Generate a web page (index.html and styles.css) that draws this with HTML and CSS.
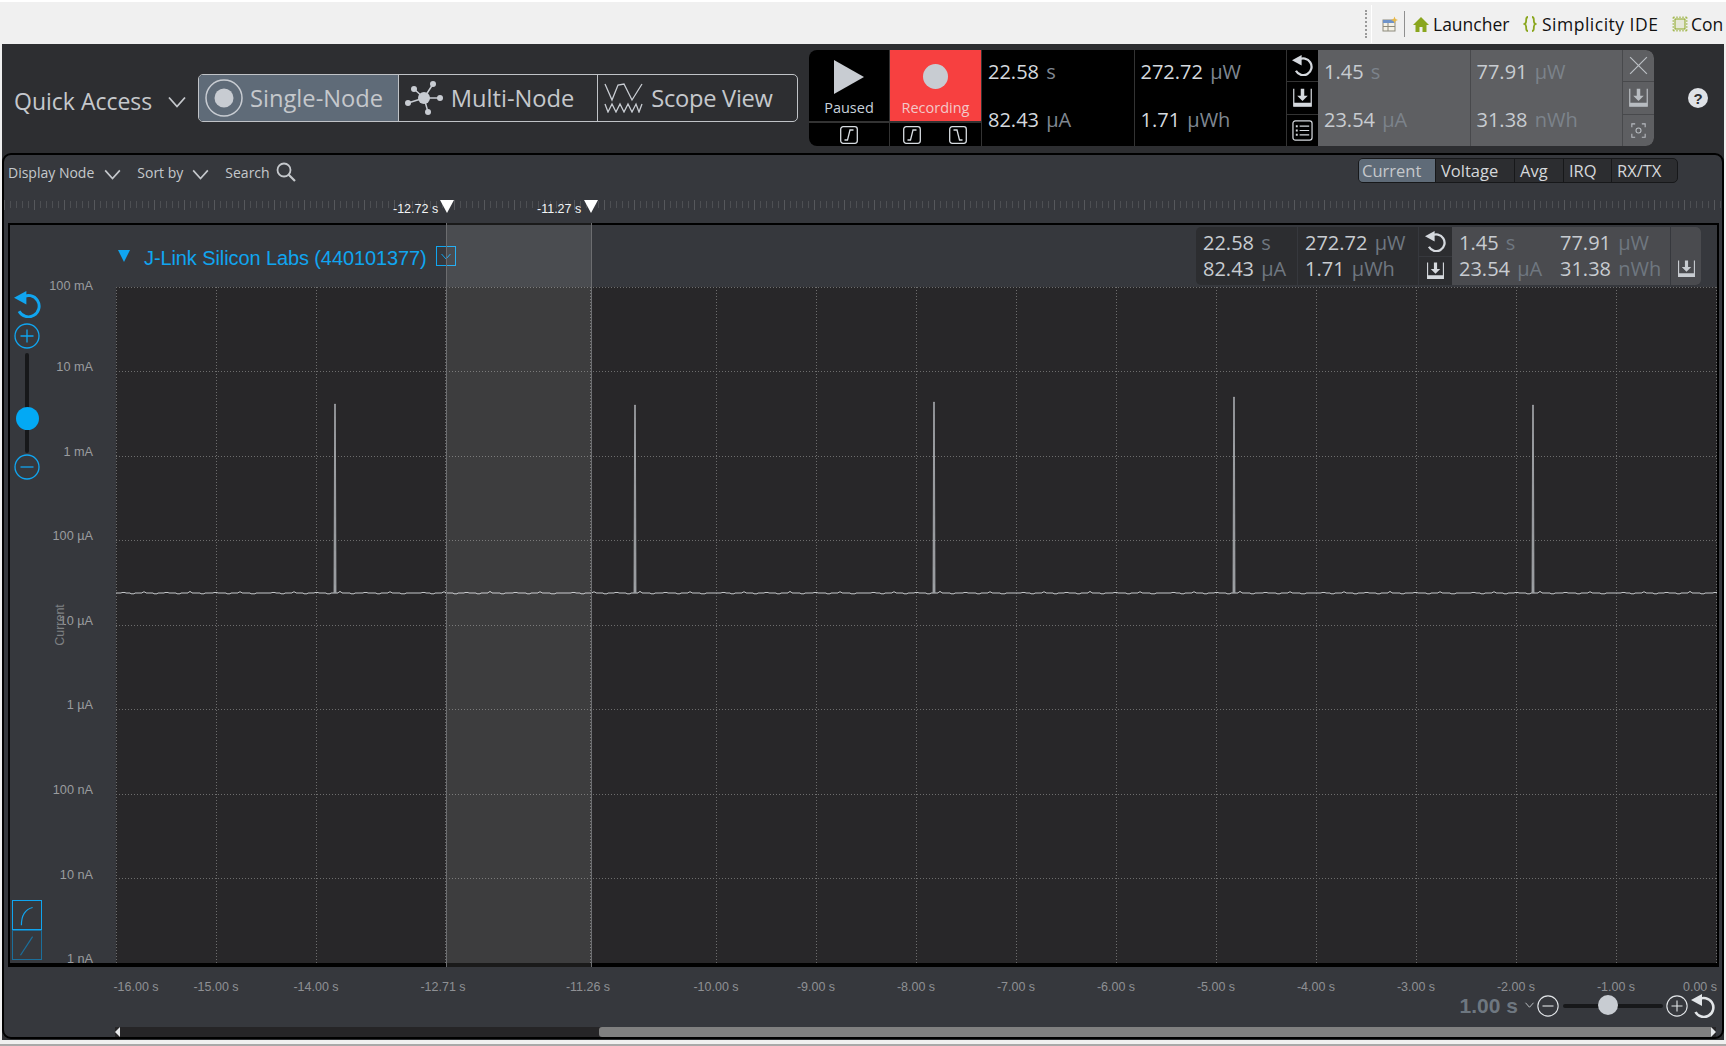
FILE: index.html
```html
<!DOCTYPE html>
<html lang="en">
<head>
<meta charset="utf-8">
<title>Energy Profiler</title>
<link rel="stylesheet" href="styles.css">
</head>
<body>
<svg class="defs" width="0" height="0" aria-hidden="true">
  <symbol id="i-reset" viewBox="0 0 24 24">
    <path d="M7.500 5.600A9.500 9.500 0 1 1 4.500 18" fill="none" stroke="currentColor" stroke-width="2.600"/>
    <path d="M0 6 11 0V12Z" fill="currentColor"/>
  </symbol>
  <symbol id="i-save" viewBox="0 0 24 24">
    <path d="M2 2V22H22V2" fill="none" stroke="currentColor" stroke-width="1.400"/>
    <path d="M2 18H22V22H2ZM10 2H14V10H18L12 16 6 10H10Z" fill="currentColor"/>
  </symbol>
  <symbol id="i-list" viewBox="0 0 22 22">
    <rect x="1" y="1" width="20" height="20" rx="2.500" fill="none" stroke="currentColor" stroke-width="1.300"/>
    <path d="M8 6.500H18M8 11H18M8 15.500H18" stroke="currentColor" stroke-width="1.300"/>
    <path d="M4 5.500h2v2H4ZM4 10h2v2H4ZM4 14.500h2v2H4Z" fill="currentColor"/>
  </symbol>
  <symbol id="i-rise" viewBox="0 0 18 18">
    <rect x="0.700" y="0.700" width="16.600" height="16.600" rx="2.500" fill="none" stroke="currentColor" stroke-width="1.300"/>
    <path d="M4.500 14H7.500L10 4H13.500" fill="none" stroke="currentColor" stroke-width="1.300"/>
  </symbol>
  <symbol id="i-fall" viewBox="0 0 18 18">
    <rect x="0.700" y="0.700" width="16.600" height="16.600" rx="2.500" fill="none" stroke="currentColor" stroke-width="1.300"/>
    <path d="M4.500 4H8L10.500 14H13.500" fill="none" stroke="currentColor" stroke-width="1.300"/>
  </symbol>
  <symbol id="i-chev" viewBox="0 0 18 12">
    <path d="M1 1.500 9 10.500 17 1.500" fill="none" stroke="currentColor" stroke-width="1.800"/>
  </symbol>
  <symbol id="i-plus" viewBox="0 0 26 26">
    <circle cx="13" cy="13" r="12" fill="none" stroke="currentColor" stroke-width="1.300"/>
    <path d="M6.500 13H19.500M13 6.500V19.500" stroke="currentColor" stroke-width="1.300"/>
  </symbol>
  <symbol id="i-minus" viewBox="0 0 26 26">
    <circle cx="13" cy="13" r="12" fill="none" stroke="currentColor" stroke-width="1.300"/>
    <path d="M6.500 13H19.500" stroke="currentColor" stroke-width="1.300"/>
  </symbol>
</svg>

<header class="topbar">
  <span class="grip"></span>
  <span class="edge"></span>
  <svg class="perspective" viewBox="0 0 16 16"><rect x="1" y="4" width="12" height="11" fill="#f4f1e6" stroke="#8d8a7c"/><rect x="1" y="4" width="12" height="3" fill="#6f93c9"/><path d="M1 10.500H13M6 7V15" stroke="#8d8a7c"/><path d="M12.500 0.500 13.500 3 16 4 13.500 5 12.500 7.500 11.500 5 9 4 11.500 3Z" fill="#e9b949"/></svg>
  <span class="sep"></span>
  <svg class="homeicon" viewBox="0 0 16 15"><path d="M8 0 16 8H13.500V15H9.500V10H6.500V15H2.500V8H0Z" fill="#8aa61e"/></svg>
  <span class="persp persp-launcher">Launcher</span>
  <svg class="bracesicon" viewBox="0 0 14 16"><path d="M5 1C2.500 1 3.500 3.500 3 6 2.800 7.300 1.500 8 1.500 8S2.800 8.700 3 10C3.500 12.500 2.500 15 5 15M9 1C11.500 1 10.500 3.500 11 6 11.200 7.300 12.500 8 12.500 8S11.200 8.700 11 10C10.500 12.500 11.500 15 9 15" fill="none" stroke="#8aa61e" stroke-width="1.800"/></svg>
  <span class="persp persp-ide">Simplicity IDE</span>
  <svg class="chipicon" viewBox="0 0 16 16"><rect x="3" y="3" width="10" height="10" fill="#e6e8d8" stroke="#8aa61e"/><path d="M2 0.500V2M5 0.500V2M8 0.500V2M11 0.500V2M14 0.500V2M2 14V15.500M5 14V15.500M8 14V15.500M11 14V15.500M14 14V15.500M0.500 2H2M0.500 5H2M0.500 8H2M0.500 11H2M0.500 14H2M14 2H15.500M14 5H15.500M14 8H15.500M14 11H15.500M14 14H15.500" stroke="#8aa61e"/></svg>
  <span class="persp persp-con">Con</span>
</header>

<div class="app">
  <section class="head">
    <div class="qa">
      <span class="qa-text">Quick Access</span>
      <svg class="qa-chev"><use href="#i-chev"/></svg>
    </div>
    <div class="seg">
      <div class="seg-item seg-active">
        <svg class="seg-ic-single" viewBox="0 0 38 38"><circle cx="19" cy="19" r="18" fill="none" stroke="#c8ccd2" stroke-width="1.500"/><circle cx="19" cy="19" r="9.500" fill="#c8ccd2"/></svg>
        <span>Single-Node</span>
      </div>
      <div class="seg-item">
        <svg class="seg-ic-multi" viewBox="0 0 38 34"><path d="M19 17 9 8M19 17 28 3M19 17H35M19 17 23 31M19 17 3 22" stroke="#c8ccd2" stroke-width="1.500"/><circle cx="19" cy="17" r="6" fill="#c8ccd2"/><circle cx="9" cy="8" r="3" fill="#c8ccd2"/><circle cx="28" cy="3" r="3" fill="#c8ccd2"/><circle cx="35" cy="17" r="3" fill="#c8ccd2"/><circle cx="23" cy="31" r="3" fill="#c8ccd2"/><circle cx="3" cy="22" r="3" fill="#c8ccd2"/></svg>
        <span>Multi-Node</span>
      </div>
      <div class="seg-item seg-scope">
        <svg class="seg-ic-scope" viewBox="0 0 39 30"><path d="M1 1 8 17 14 2 20 1 28 17 38 1" fill="none" stroke="#c8ccd2" stroke-width="1.300"/><path d="M1 21 4 29 8 21 12 29 16 21 20 29 24 21 28 29 32 21 35 29 38 21" fill="none" stroke="#c8ccd2" stroke-width="1.300"/></svg>
        <span>Scope View</span>
      </div>
    </div>
    <div class="readout">
      <div class="mode mode-paused">
        <div class="mode-top">
          <svg class="play" viewBox="0 0 30 34"><path d="M0 0 30 17 0 34Z" fill="#c8ccd2"/></svg>
          <span class="mode-label">Paused</span>
        </div>
        <div class="mode-bottom"><svg class="trig"><use href="#i-rise"/></svg></div>
      </div>
      <div class="mode mode-rec">
        <div class="mode-top rec-top">
          <span class="rec-dot"></span>
          <span class="mode-label rec-label">Recording</span>
        </div>
        <div class="mode-bottom mode-bottom-two"><svg class="trig"><use href="#i-rise"/></svg><svg class="trig"><use href="#i-fall"/></svg></div>
      </div>
      <div class="stat"><span>22.58 <i>s</i></span><span>82.43 <i>µA</i></span></div>
      <div class="stat"><span>272.72 <i>µW</i></span><span>1.71 <i>µWh</i></span></div>
      <div class="tools">
        <div class="tool"><svg class="tool-ic"><use href="#i-reset"/></svg></div>
        <div class="tool"><svg class="tool-ic"><use href="#i-save"/></svg></div>
        <div class="tool"><svg class="tool-ic"><use href="#i-list"/></svg></div>
      </div>
      <div class="stat stat-grey"><span>1.45 <i>s</i></span><span>23.54 <i>µA</i></span></div>
      <div class="stat stat-grey"><span>77.91 <i>µW</i></span><span>31.38 <i>nWh</i></span></div>
      <div class="tools tools-grey">
        <div class="tool"><svg class="tool-ic" viewBox="0 0 20 20"><path d="M2 2 18 18M18 2 2 18" stroke="currentColor" stroke-width="1.200"/></svg></div>
        <div class="tool"><svg class="tool-ic"><use href="#i-save"/></svg></div>
        <div class="tool"><svg class="tool-ic-sm" viewBox="0 0 18 18"><path d="M1 5V1H5M13 1H17V5M17 13V17H13M5 17H1V13" fill="none" stroke="currentColor" stroke-width="1.300"/><circle cx="9" cy="9" r="3" fill="none" stroke="currentColor" stroke-width="1.300"/></svg></div>
      </div>
    </div>
    <svg class="help" viewBox="0 0 20 20"><circle cx="10" cy="10" r="10" fill="#dfe2e6"/><text x="10" y="15.500" text-anchor="middle" class="help-mark">?</text></svg>
  </section>

  <section class="panel">
    <div class="toolbar">
      <div class="tb-left">
        <span class="tb-item">Display Node</span><svg class="tb-chev"><use href="#i-chev"/></svg>
        <span class="tb-item tb-sort">Sort by</span><svg class="tb-chev tb-chev2"><use href="#i-chev"/></svg>
        <span class="tb-item tb-search">Search</span>
        <svg class="tb-mag" viewBox="0 0 20 20"><circle cx="8" cy="8" r="6.500" fill="none" stroke="#c5c8cc" stroke-width="1.800"/><path d="M12.500 12.500 19 19" stroke="#c5c8cc" stroke-width="2.200"/></svg>
      </div>
      <div class="tabs">
        <span class="tab tab-active tab-current">Current</span>
        <span class="tab tab-voltage">Voltage</span>
        <span class="tab tab-avg">Avg</span>
        <span class="tab tab-irq">IRQ</span>
        <span class="tab tab-rx">RX/TX</span>
      </div>
    </div>

    <div class="ruler">
      <div class="marker marker-a"><span>-12.72 s</span><b></b></div>
      <div class="marker marker-b"><span>-11.27 s</span><b></b></div>
    </div>

    <div class="frame">
      <div class="frame-head">
        <span class="node-tri"></span>
        <span class="node-title">J-Link Silicon Labs (440101377)</span>
        <span class="node-box"><svg class="node-box-chev"><use href="#i-chev"/></svg></span>
        <div class="mini">
          <div class="mini-stat"><span>22.58 <i>s</i></span><span>82.43 <i>µA</i></span></div>
          <div class="mini-stat mini-wide"><span>272.72 <i>µW</i></span><span>1.71 <i>µWh</i></span></div>
          <div class="mini-tools">
            <div class="mini-tool"><svg class="mini-ic mini-ic-reset"><use href="#i-reset"/></svg></div>
            <div class="mini-tool"><svg class="mini-ic"><use href="#i-save"/></svg></div>
          </div>
          <div class="mini-grey">
            <div class="mini-stat mini-g1"><span>1.45 <i>s</i></span><span>23.54 <i>µA</i></span></div>
            <div class="mini-stat mini-g2"><span>77.91 <i>µW</i></span><span>31.38 <i>nWh</i></span></div>
            <div class="mini-save"><svg class="mini-ic"><use href="#i-save"/></svg></div>
          </div>
        </div>
      </div>
      <div class="frame-body">
        <div class="side">
          <div class="controls">
            <svg class="ctl-reset"><use href="#i-reset"/></svg>
            <svg class="ctl-circle"><use href="#i-plus"/></svg>
            <div class="vslider"><span class="vthumb"></span></div>
            <svg class="ctl-circle"><use href="#i-minus"/></svg>
            <div class="scale-btns">
              <span class="scale-btn scale-on"><svg viewBox="0 0 30 30"><path d="M9 26C9 16 13 9 21 7" fill="none" stroke="#10a5f0" stroke-width="1.300"/></svg></span>
              <span class="scale-btn"><svg viewBox="0 0 30 30"><path d="M8 26 21 6" fill="none" stroke="#1b6f9c" stroke-width="1.300"/></svg></span>
            </div>
          </div>
          <div class="yaxis">
            <span>100 mA</span><span>10 mA</span><span>1 mA</span><span>100 µA</span><span>10 µA</span><span>1 µA</span><span>100 nA</span><span>10 nA</span><span>1 nA</span>
          </div>
          <span class="yname">Current</span>
        </div>
        <div class="plot">
          <svg class="plot-svg" viewBox="0 0 1601 676" preserveAspectRatio="none">
            <defs>
              <pattern id="noise" x="0" y="300" width="150" height="12" patternUnits="userSpaceOnUse">
                <polyline fill="none" stroke="#c4c7ca" points="0,6 5,6 6,5.500 9,5.500 10,6 14,6 15,6.800 18,6.800 19,6 26,6 27,5 29,5 30,6 37,6 38,6.800 41,6.800 42,6 48,6 49,5.500 52,5.500 53,6 60,6 61,6.800 64,6.800 65,6 72,6 73,4.800 75,4.800 76,6 84,6 85,6.800 88,6.800 89,6 97,6 98,5.500 101,5.500 102,6 110,6 111,6.800 114,6.800 115,6 122,6 123,5 125,5 126,6 134,6 135,6.800 139,6.800 140,6 150,6"/>
              </pattern>
            </defs>
            <g class="grid">
              <path d="M0.500 0V676M100.500 0V676M200.500 0V676M329.500 0V676M474.500 0V676M600.500 0V676M700.500 0V676M800.500 0V676M900.500 0V676M1000.500 0V676M1100.500 0V676M1200.500 0V676M1300.500 0V676M1400.500 0V676M1500.500 0V676M1600.500 0V676"/>
              <path d="M0 0.500H1601M0 84.500H1601M0 169.500H1601M0 253.500H1601M0 338.500H1601M0 422.500H1601M0 507.500H1601M0 591.500H1601"/>
            </g>
            <rect x="0" y="300" width="1601" height="12" fill="url(#noise)"/>
            <g class="spikes">
              <path d="M218 306 218.700 117H219.300L220 306"/>
              <path d="M518 306 518.700 118H519.300L520 306"/>
              <path d="M817 306 817.700 115H818.300L819 306"/>
              <path d="M1117 306 1117.700 110H1118.300L1119 306"/>
              <path d="M1416 306 1416.700 118H1417.300L1418 306"/>
            </g>
          </svg>
        </div>
      </div>
      <div class="selection"></div>
    </div>

    <div class="xaxis">
      <span class="xl" style="left:132px">-16.00 s</span>
      <span class="xl" style="left:212px">-15.00 s</span>
      <span class="xl" style="left:312px">-14.00 s</span>
      <span class="xl" style="left:439px">-12.71 s</span>
      <span class="xl" style="left:584px">-11.26 s</span>
      <span class="xl" style="left:712px">-10.00 s</span>
      <span class="xl" style="left:812px">-9.00 s</span>
      <span class="xl" style="left:912px">-8.00 s</span>
      <span class="xl" style="left:1012px">-7.00 s</span>
      <span class="xl" style="left:1112px">-6.00 s</span>
      <span class="xl" style="left:1212px">-5.00 s</span>
      <span class="xl" style="left:1312px">-4.00 s</span>
      <span class="xl" style="left:1412px">-3.00 s</span>
      <span class="xl" style="left:1512px">-2.00 s</span>
      <span class="xl" style="left:1612px">-1.00 s</span>
      <span class="xl" style="left:1696px">0.00 s</span>
    </div>

    <div class="zoomrow">
      <span class="zoom-val">1.00 s</span>
      <svg class="zoom-chev"><use href="#i-chev"/></svg>
      <svg class="zoom-circle"><use href="#i-minus"/></svg>
      <div class="hslider"><span class="hthumb"></span></div>
      <svg class="zoom-circle zoom-plus"><use href="#i-plus"/></svg>
      <svg class="zoom-reset"><use href="#i-reset"/></svg>
    </div>

    <div class="scroll">
      <span class="scroll-left"></span>
      <span class="scroll-thumb"></span>
      <span class="scroll-right"></span>
    </div>
  </section>
</div>
</body>
</html>
```

FILE: styles.css
```css
* { box-sizing: border-box; }
html, body { margin: 0; height: 100%; }
body {
  width: 1726px;
  height: 1046px;
  overflow: hidden;
  background: #f0f0f0;
  font-family: "Open Sans", "Noto Sans", sans-serif;
  display: flex;
  flex-direction: column;
  border-bottom: 2px solid #a9a9a9;
}
i { font-style: normal; }
.defs { position: absolute; }

/* top bar */
.topbar {
  height: 44px;
  flex: none;
  border-top: 2px solid #fff;
  padding: 2px 0 0 1365px;
  display: flex;
  align-items: center;
  white-space: nowrap;
  overflow: hidden;
}
.grip { width: 2px; height: 28px; border-left: 2px dotted #9a9a9a; }
.edge { width: 1px; height: 38px; background: #fff; margin: 0 0 0 4px; }
.perspective { width: 16px; height: 16px; margin-left: 10px; }
.sep { width: 1px; height: 26px; background: #8f8f8f; margin-left: 6px; }
.homeicon { width: 16px; height: 15px; margin-left: 8px; }
.persp { font-size: 17.500px; color: #111; margin-left: 4px; }
.persp-launcher { width: 90px; }
.bracesicon { width: 14px; height: 16px; }
.persp-ide { width: 130px; margin-left: 5px; letter-spacing: 0.500px; }
.persp-con { margin-left: 3px; }
.chipicon { width: 16px; height: 16px; }

.app {
  width: 1722px;
  margin-left: 2px;
  height: 996px;
  flex: none;
  background: #2d2e31;
  display: flex;
  flex-direction: column;
}

/* header */
.head {
  height: 109px;
  flex: none;
  display: flex;
  align-items: center;
  padding: 0 0 1px 12px;
}
.qa { width: 184px; flex: none; display: flex; align-items: center; padding-top: 6px; color: #c5c8cc; }
.qa-text { font-size: 23px; width: 153px; white-space: nowrap; }
.qa-chev { width: 18px; height: 12px; margin-top: 2px; margin-left: 1px; }

.seg {
  width: 600px;
  height: 48px;
  flex: none;
  display: flex;
  border: 1px solid #c0c3c7;
  border-radius: 5px;
  overflow: hidden;
  color: #c5c8cc;
  font-size: 23.700px;
}
.seg-item {
  flex: 1;
  display: flex;
  align-items: center;
  border-right: 1px solid #c0c3c7;
  white-space: nowrap;
}
.seg-item:last-child { border-right: 0; }
.seg-active { background: #5f6b78; }
.seg-scope { letter-spacing: -0.300px; }
.seg-ic-single { width: 38px; height: 38px; margin: 0 7px 0 6px; }
.seg-ic-multi { width: 38px; height: 34px; margin: 0 8px 0 6px; }
.seg-ic-scope { width: 39px; height: 30px; margin: 0 8px 0 6px; }

.readout {
  width: 845px;
  height: 96px;
  flex: none;
  margin-left: 11px;
  background: #000;
  border-radius: 8px;
  overflow: hidden;
  display: flex;
  color: #d5d9de;
}
.mode { flex: none; display: flex; flex-direction: column; border-right: 1px solid #333; }
.mode-paused { width: 81px; }
.mode-rec { width: 92px; }
.mode-top { height: 71px; display: flex; flex-direction: column; align-items: center; padding-top: 10px; }
.rec-top { background: #f74040; padding-top: 14px; }
.play { width: 30px; height: 34px; }
.rec-dot { width: 25px; height: 25px; border-radius: 50%; background: #c8ccd2; }
.mode-label { font-size: 14.500px; line-height: 20px; margin-top: 4px; color: #c9d2dc; }
.rec-label { color: #f3c8c8; margin-top: 9px; }
.mode-bottom {
  flex: 1;
  border-top: 2px solid #333;
  display: flex;
  align-items: center;
  justify-content: center;
  padding-top: 1px;
  color: #d8dde2;
}
.mode-bottom-two { justify-content: space-between; padding: 1px 14px 0 13px; }
.trig { width: 18px; height: 18px; }

.stat {
  width: 152.500px;
  flex: none;
  border-right: 1px solid #333;
  display: flex;
  flex-direction: column;
  justify-content: center;
  padding: 0 0 4px 6px;
  font-size: 20px;
  word-spacing: 2px;
  white-space: nowrap;
}
.stat span { line-height: 48px; flex: none; }
.stat i { color: #7f8791; }
.stat-grey { background: #5e5f62; border-right-color: #48494c; color: #c8ccd1; }
.stat-grey i { color: #7c838b; }
.tools { width: 31px; flex: none; display: flex; flex-direction: column; color: #d5d9de; }
.tools-grey { background: #5e5f62; color: #b8bcc1; }
.tool {
  flex: 1;
  display: flex;
  align-items: center;
  justify-content: center;
  border-bottom: 1px solid #333;
}
.tools-grey .tool { border-bottom-color: #48494c; }
.tool:last-child { border-bottom: 0; }
.tool-ic { width: 21px; height: 21px; }
.tool-ic-sm { width: 15px; height: 15px; }
.help { width: 20px; height: 20px; margin-left: 34px; }
.help-mark { font: bold 15px "Liberation Sans", sans-serif; fill: #2d2e31; }

/* panel */
.panel {
  flex: 1;
  background: #36383d;
  border: 2px solid #000;
  border-radius: 9px;
  display: flex;
  flex-direction: column;
  position: relative;
  margin-bottom: 4px;
}
.toolbar { height: 38px; flex: none; position: relative; display: flex; align-items: center; justify-content: space-between; padding: 0 44px 3px 4px; }
.tb-left { display: flex; align-items: center; color: #c5c8cc; font-size: 14px; }
.tb-item { white-space: nowrap; }
.tb-chev { width: 17px; height: 11px; margin-left: 10px; margin-top: 3px; color: #c5c8cc; }
.tb-chev2 { margin-left: 9px; }
.tb-sort { margin-left: 16px; }
.tb-search { margin-left: 16px; }
.tb-mag { width: 20px; height: 20px; margin-left: 6px; margin-top: -2px; }

.tabs { width: 320px; height: 25px; display: flex; border: 1px solid #17181a; border-radius: 5px; background: #2c2d30; overflow: hidden; margin-top: -4px; font-size: 16.500px; color: #d5d8db; }
.tab { display: flex; align-items: center; padding-left: 5px; border-right: 1px solid #17181a; white-space: nowrap; }
.tab:last-child { border-right: 0; }
.tab-active { background: #5f6b78; color: #c5c8cc; padding-left: 3px; }
.tab-current { width: 77px; }
.tab-voltage { width: 79px; }
.tab-avg { width: 49px; }
.tab-irq { width: 48px; }
.tab-rx { flex: 1; }

.ruler {
  height: 30px;
  flex: none;
  position: relative;
  background-image:
    repeating-linear-gradient(90deg, #56585c 0 1px, transparent 1px 30px),
    repeating-linear-gradient(90deg, #4d4f53 0 1px, transparent 1px 6px);
  background-size: 100% 10px, 100% 7px;
  background-position: 0 7px, 0 8px;
  background-repeat: no-repeat;
}
.marker { position: absolute; top: 7px; display: flex; align-items: flex-start; }
.marker-a { left: 389px; }
.marker-b { left: 533px; }
.marker span { font: 12.500px/14px "Liberation Sans", sans-serif; color: #f2f4f6; margin-top: 2px; width: 47px; white-space: nowrap; }
.marker b { width: 0; height: 0; border-left: 7.500px solid transparent; border-right: 7.500px solid transparent; border-top: 13px solid #fff; }

/* frame */
.frame {
  width: 1711px;
  height: 744px;
  flex: none;
  margin-left: 4px;
  border: solid #000;
  border-width: 2px 2px 4px;
  position: relative;
  display: flex;
  flex-direction: column;
}
.frame-head { height: 62px; flex: none; display: flex; align-items: flex-start; position: relative; padding-top: 2px; }
.node-tri { width: 0; height: 0; border-left: 6.500px solid transparent; border-right: 6.500px solid transparent; border-top: 12px solid #10a5f0; margin: 23px 0 0 108px; }
.node-title { font: 20px/28px "Liberation Sans", sans-serif; color: #10a5f0; margin: 17px 0 0 14px; white-space: nowrap; letter-spacing: -0.100px; }
.node-box { width: 20px; height: 20px; border: 1px solid #10a5f0; margin: 19px 0 0 9px; color: #10a5f0; display: flex; align-items: center; justify-content: center; }
.node-box-chev { width: 10px; height: 7px; }

.mini {
  position: absolute;
  right: 16px;
  top: 2px;
  width: 505px;
  height: 58px;
  display: flex;
  background: #2c2d30;
  border-radius: 5px;
  overflow: hidden;
  color: #c8ccd1;
  font-size: 20px;
  line-height: 26px;
  word-spacing: 2px;
}
.mini i { color: #6f7780; }
.mini-stat { display: flex; flex-direction: column; justify-content: center; padding-left: 7px; white-space: nowrap; flex: none; }
.mini-stat:first-child { width: 102px; border-right: 1px solid #36383d; }
.mini-wide { width: 121px; border-right: 1px solid #36383d; }
.mini-tools { width: 33px; flex: none; display: flex; flex-direction: column; color: #d5d9de; }
.mini-tool { flex: 1; display: flex; align-items: center; justify-content: center; }
.mini-tool:first-child { border-bottom: 1px solid #36383d; }
.mini-ic { width: 19px; height: 19px; }
.mini-ic-reset { width: 21px; height: 21px; }
.mini-grey { flex: 1; display: flex; background: #4a4b4f; }
.mini-grey .mini-g1 { width: 108px; padding-left: 7px; border: 0; }
.mini-g2 { width: 110px; padding-left: 0; }
.mini-save { flex: 1; display: flex; align-items: flex-end; justify-content: center; padding-bottom: 7px; border-left: 1px solid #36383d; color: #c8ccd1; }

.frame-body { flex: 1; display: flex; min-height: 0; }
.side { width: 106px; flex: none; position: relative; display: flex; }
.controls { width: 34px; flex: none; display: flex; flex-direction: column; align-items: center; padding-top: 4px; color: #10a5f0; }
.ctl-reset { width: 27px; height: 27px; }
.ctl-circle { width: 26px; height: 26px; margin-top: 5px; }
.vslider { width: 4px; height: 100px; background: #17181a; margin-top: 4px; position: relative; border-radius: 2px; flex: none; }
.vslider + .ctl-circle { margin-top: 1px; }
.vthumb { position: absolute; left: -9.500px; top: 54px; width: 23px; height: 23px; border-radius: 50%; background: #03a9f4; }
.scale-btns { margin-top: auto; display: flex; flex-direction: column; margin-bottom: 3px; }
.scale-btn { width: 30px; height: 30px; display: block; border: 1px solid #1b6f9c; }
.scale-btn svg { display: block; width: 100%; height: 100%; }
.scale-on { border: 1.500px solid #10a5f0; }
.yaxis {
  flex: 1;
  margin-top: -14.500px;
  height: 690.500px;
  overflow: hidden;
  display: grid;
  grid-auto-rows: 84.600px;
  padding-right: 23px;
  text-align: right;
  font: 12.700px/20px "Liberation Sans", sans-serif;
  color: #9a9c9f;
}
.yaxis span:first-child { padding-top: 3px; }
.yname { position: absolute; left: 50px; top: 331px; transform: rotate(-90deg); font: 12.500px/14px "Liberation Sans", sans-serif; color: #7f8184; width: 0; display: flex; justify-content: center; }

.plot { flex: 1; background: #282729; min-width: 0; }
.plot-svg { display: block; width: 100%; height: 100%; }
.grid path { fill: none; stroke: #6d6d6d; stroke-width: 1; stroke-dasharray: 1 2; }
.spikes path { fill: #8c8f92; stroke: #b9bcc0; stroke-width: 0.700; }

.selection {
  position: absolute;
  left: 436px;
  top: -2px;
  bottom: -4px;
  width: 146px;
  background: rgba(255, 255, 255, 0.1);
  border-left: 1px solid #6c6d70;
  border-right: 1px solid #6c6d70;
}

/* axis & footer */
.xaxis { height: 26px; flex: none; position: relative; }
.xl { position: absolute; top: 12px; transform: translateX(-50%); font: 12.500px/16px "Liberation Sans", sans-serif; color: #8e9094; white-space: nowrap; }

.zoomrow { height: 28px; flex: none; display: flex; align-items: center; justify-content: flex-end; padding: 0 7px 2px 0; color: #e2e5e8; }
.zoom-val { font: bold 21px/24px "Liberation Sans", sans-serif; color: #6e7780; white-space: nowrap; }
.zoom-chev { width: 11px; height: 6px; margin: -3px 0 0 6px; color: #c5c8cc; }
.zoom-circle { width: 22px; height: 22px; margin-left: 2px; }
.hslider { width: 100px; height: 4px; background: #17181a; margin-left: 4px; border-radius: 2px; position: relative; }
.hthumb { position: absolute; left: 35px; top: -9px; width: 20px; height: 20px; border-radius: 50%; background: #c8ccd2; }
.zoom-plus { margin-left: 3px; }
.zoom-reset { width: 24px; height: 24px; margin-left: 3px; }

.scroll { margin: 6px 0 0 111px; width: 1601px; height: 10px; background: #262527; display: flex; align-items: stretch; }
.scroll-left { width: 0; height: 0; border-top: 5px solid transparent; border-bottom: 5px solid transparent; border-right: 5px solid #e6e8ea; }
.scroll-thumb { margin-left: 479px; flex: 1; background: #808080; border-radius: 3px 0 0 3px; }
.scroll-right { width: 0; height: 0; border-top: 5px solid transparent; border-bottom: 5px solid transparent; border-left: 5px solid #e6e8ea; }
```
